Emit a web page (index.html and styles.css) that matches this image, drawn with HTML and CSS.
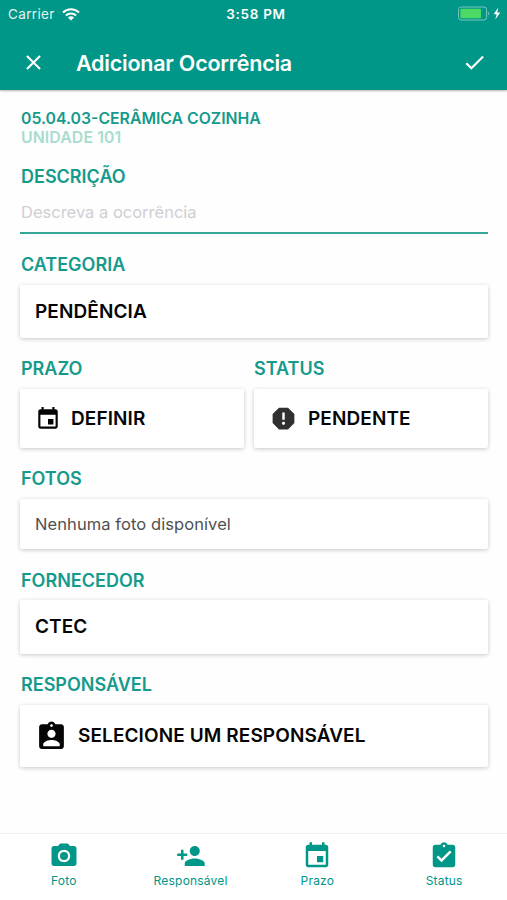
FILE: index.html
```html
<!DOCTYPE html>
<html lang="pt-BR">
<head>
<meta charset="utf-8">
<title>Adicionar Ocorrência</title>
<link rel="stylesheet" href="styles.css">
</head>
<body>
<header class="header">
  <div class="statusbar">
    <div class="carrier"><span>Carrier</span>
      <svg class="wifi" viewBox="0 0 18 13"><g fill="none" stroke="#fff" stroke-width="2.1"><path d="M1 4.6a11.4 11.4 0 0 1 16 0"/><path d="M3.9 7.6a7.3 7.3 0 0 1 10.2 0"/></g><path fill="#fff" d="M9 12.6 5.9 9.5a4.4 4.4 0 0 1 6.2 0z"/></svg>
    </div>
    <div class="clock">3:58 PM</div>
    <div class="power">
      <svg class="battery" viewBox="0 0 43 16"><rect x=".6" y="1" width="28" height="13" rx="2.6" fill="none" stroke="#7cc8bf" stroke-width="1"/><path d="M30.2 5.5q2.2 2 0 4z" fill="#7cc8bf"/><rect x="2.4" y="2.8" width="20.6" height="9.4" rx="1" fill="#4cd964"/><path d="M40.3 1.6 35.6 8.2h3l-1.3 5.4 5-7h-3.1z" fill="#fff"/></svg>
    </div>
  </div>
  <div class="toolbar">
    <svg class="tool" viewBox="0 0 24 24"><path d="M19 6.41 17.59 5 12 10.59 6.41 5 5 6.41 10.59 12 5 17.59 6.41 19 12 13.41 17.59 19 19 17.59 13.41 12z"/></svg>
    <h1 class="title">Adicionar Ocorrência</h1>
    <svg class="tool" viewBox="0 0 24 24"><path d="M9 16.17 4.83 12l-1.42 1.41L9 19 21 7l-1.41-1.41z"/></svg>
  </div>
</header>

<main class="form">
  <div class="item">05.04.03-CERÂMICA COZINHA</div>
  <div class="unit">UNIDADE 101</div>

  <section class="field description">
    <h2 class="label">DESCRIÇÃO</h2>
    <div class="input">Descreva a ocorrência</div>
  </section>

  <section class="field category">
    <h2 class="label">CATEGORIA</h2>
    <div class="card"><span>PENDÊNCIA</span></div>
  </section>

  <div class="row">
    <section class="field due">
      <h2 class="label">PRAZO</h2>
      <div class="card"><svg class="i-event" viewBox="0 0 24 24"><path d="M17 12h-5v5h5v-5zM16 1v2H8V1H6v2H5c-1.11 0-1.99.9-1.99 2L3 19c0 1.1.89 2 2 2h14c1.1 0 2-.9 2-2V5c0-1.1-.9-2-2-2h-1V1h-2zm3 18H5V8h14v11z"/></svg><span>DEFINIR</span></div>
    </section>
    <section class="field status">
      <h2 class="label">STATUS</h2>
      <div class="card"><svg class="i-report" viewBox="0 0 24 24"><path d="M15.73 3H8.27L3 8.27v7.46L8.27 21h7.46L21 15.73V8.27L15.73 3zM12 17.3c-.72 0-1.3-.58-1.3-1.3s.58-1.3 1.3-1.3 1.3.58 1.3 1.3-.58 1.3-1.3 1.3zm1-4.3h-2V7h2v6z"/></svg><span>PENDENTE</span></div>
    </section>
  </div>

  <section class="field photos">
    <h2 class="label">FOTOS</h2>
    <div class="card"><span class="empty">Nenhuma foto disponível</span></div>
  </section>

  <section class="field supplier">
    <h2 class="label">FORNECEDOR</h2>
    <div class="card"><span>CTEC</span></div>
  </section>

  <section class="field owner">
    <h2 class="label">RESPONSÁVEL</h2>
    <div class="card"><svg class="i-owner" viewBox="0 0 24 24"><path d="M19 3h-4.18C14.4 1.84 13.3 1 12 1c-1.3 0-2.4.84-2.82 2H5c-1.1 0-2 .9-2 2v14c0 1.1.9 2 2 2h14c1.1 0 2-.9 2-2V5c0-1.1-.9-2-2-2zm-7 0c.55 0 1 .45 1 1s-.45 1-1 1-1-.45-1-1 .45-1 1-1zm0 4c1.66 0 3 1.34 3 3s-1.34 3-3 3-3-1.34-3-3 1.34-3 3-3zm6 12H6v-1.4c0-2 4-3.1 6-3.1s6 1.1 6 3.1V19z"/></svg><span>SELECIONE UM RESPONSÁVEL</span></div>
  </section>
</main>

<nav class="tabs">
  <div class="tab"><svg viewBox="0 0 24 24"><circle cx="12" cy="12" r="3.2"/><path d="M9 2 7.17 4H4c-1.1 0-2 .9-2 2v12c0 1.1.9 2 2 2h16c1.1 0 2-.9 2-2V6c0-1.1-.9-2-2-2h-3.17L15 2H9zm3 15c-2.76 0-5-2.24-5-5s2.24-5 5-5 5 2.24 5 5-2.24 5-5 5z"/></svg><span>Foto</span></div>
  <div class="tab"><svg viewBox="0 0 24 24"><path d="M15 12c2.21 0 4-1.79 4-4s-1.79-4-4-4-4 1.79-4 4 1.79 4 4 4zm-9-2V7H4v3H1v2h3v3h2v-3h3v-2H6zm9 4c-2.67 0-8 1.34-8 4v2h16v-2c0-2.66-5.33-4-8-4z"/></svg><span>Responsável</span></div>
  <div class="tab"><svg viewBox="0 0 24 24"><path d="M17 12h-5v5h5v-5zM16 1v2H8V1H6v2H5c-1.11 0-1.99.9-1.99 2L3 19c0 1.1.89 2 2 2h14c1.1 0 2-.9 2-2V5c0-1.1-.9-2-2-2h-1V1h-2zm3 18H5V8h14v11z"/></svg><span>Prazo</span></div>
  <div class="tab"><svg viewBox="0 0 24 24"><path d="M19 3h-4.18C14.4 1.84 13.3 1 12 1c-1.3 0-2.4.84-2.82 2H5c-1.1 0-2 .9-2 2v14c0 1.1.9 2 2 2h14c1.1 0 2-.9 2-2V5c0-1.1-.9-2-2-2zm-7 0c.55 0 1 .45 1 1s-.45 1-1 1-1-.45-1-1 .45-1 1-1zm-2 14-4-4 1.41-1.41L10 14.17l6.59-6.59L18 9l-8 8z"/></svg><span>Status</span></div>
</nav>
</body>
</html>
```
FILE: styles.css
```css
* { box-sizing: border-box; }
body {
  margin: 0;
  height: 900px;
  display: flex;
  flex-direction: column;
  background: #fefefe;
  color: #050505;
  font-family: Inter, "Liberation Sans", sans-serif;
  white-space: nowrap;
  overflow: hidden;
}
svg { display: block; flex: none; fill: currentColor; }

.header {
  height: 90px;
  background: #009688;
  color: #fff;
  box-shadow: 0 1px 2px rgba(0, 0, 0, .3);
}
.statusbar {
  height: 28px;
  display: grid;
  grid-template-columns: 1fr auto 1fr;
  align-items: center;
  padding: 0 5px 0 8px;
  font-size: 13px;
}
.carrier { display: flex; align-items: center; gap: 7px; color: #e0f5f2; font-size: 13.5px; letter-spacing: .35px; }
.wifi { width: 18px; height: 13px; }
.clock { padding-left: 2px; font-size: 13.5px; font-weight: 600; letter-spacing: .7px; }
.power { display: flex; justify-content: flex-end; padding-right: 1px; }
.battery { width: 43px; height: 16px; }
.toolbar { height: 62px; padding: 7px 20px 0 21px; display: flex; align-items: center; }
.tool { width: 25px; height: 25px; }
.title { flex: 1; margin: 0 0 0 30px; font-size: 21.5px; line-height: 30px; font-weight: 600; letter-spacing: -.22px; }

.form { flex: 1; padding: 18px 19px 0 20px; }
.item, .unit { height: 19px; line-height: 21px; font-size: 15.8px; font-weight: 600; color: #159a8b; padding-left: 1px; }
.unit { color: #a8dccf; letter-spacing: .12px; }
.label { margin: 0; height: 24px; line-height: 24px; padding-left: 1px; font-size: 18px; font-weight: 600; color: #159a8b; }
.description { margin-top: 19px; }
.input { height: 45px; border-bottom: 2px solid #35a598; padding: 1px 0 0 1px; line-height: 44px; font-size: 16.5px; color: #cfcfd2; }
.category { margin-top: 19px; }
.card {
  display: flex;
  align-items: center;
  margin-top: 8px;
  padding: 0 15px;
  border-radius: 2px;
  background: #fff;
  box-shadow: 0 1px 4px rgba(0, 0, 0, .22);
  font-size: 19px;
  font-weight: 600;
  letter-spacing: .1px;
}
.card span { padding-bottom: 1px; }
.category .card { height: 53px; }
.row { display: grid; grid-template-columns: 224px 1fr; gap: 10px; margin-top: 19px; }
.row .card { height: 59px; }
.status .label { padding-left: 0; }
.i-event { width: 26px; height: 26px; margin-right: 10px; }
.i-report { width: 29px; height: 29px; margin-right: 10px; color: #303030; }
.photos { margin-top: 19px; }
.photos .card { height: 50px; }
.card .empty { padding-bottom: 0; font-size: 16.5px; font-weight: 400; letter-spacing: .08px; color: #505050; }
.supplier { margin-top: 20px; }
.supplier .card { height: 54px; margin-top: 7px; }
.owner { margin-top: 19px; }
.owner .card { height: 62px; }
.i-owner { width: 33px; height: 33px; margin-right: 10px; }

.tabs { height: 67px; display: grid; grid-template-columns: repeat(4, 1fr); border-top: 1px solid #efefef; background: #fff; color: #009688; }
.tab { display: flex; flex-direction: column; align-items: center; padding: 7px 0 0 1px; font-size: 12px; line-height: 20px; letter-spacing: .2px; }
.tab svg { width: 30px; height: 30px; }
```
